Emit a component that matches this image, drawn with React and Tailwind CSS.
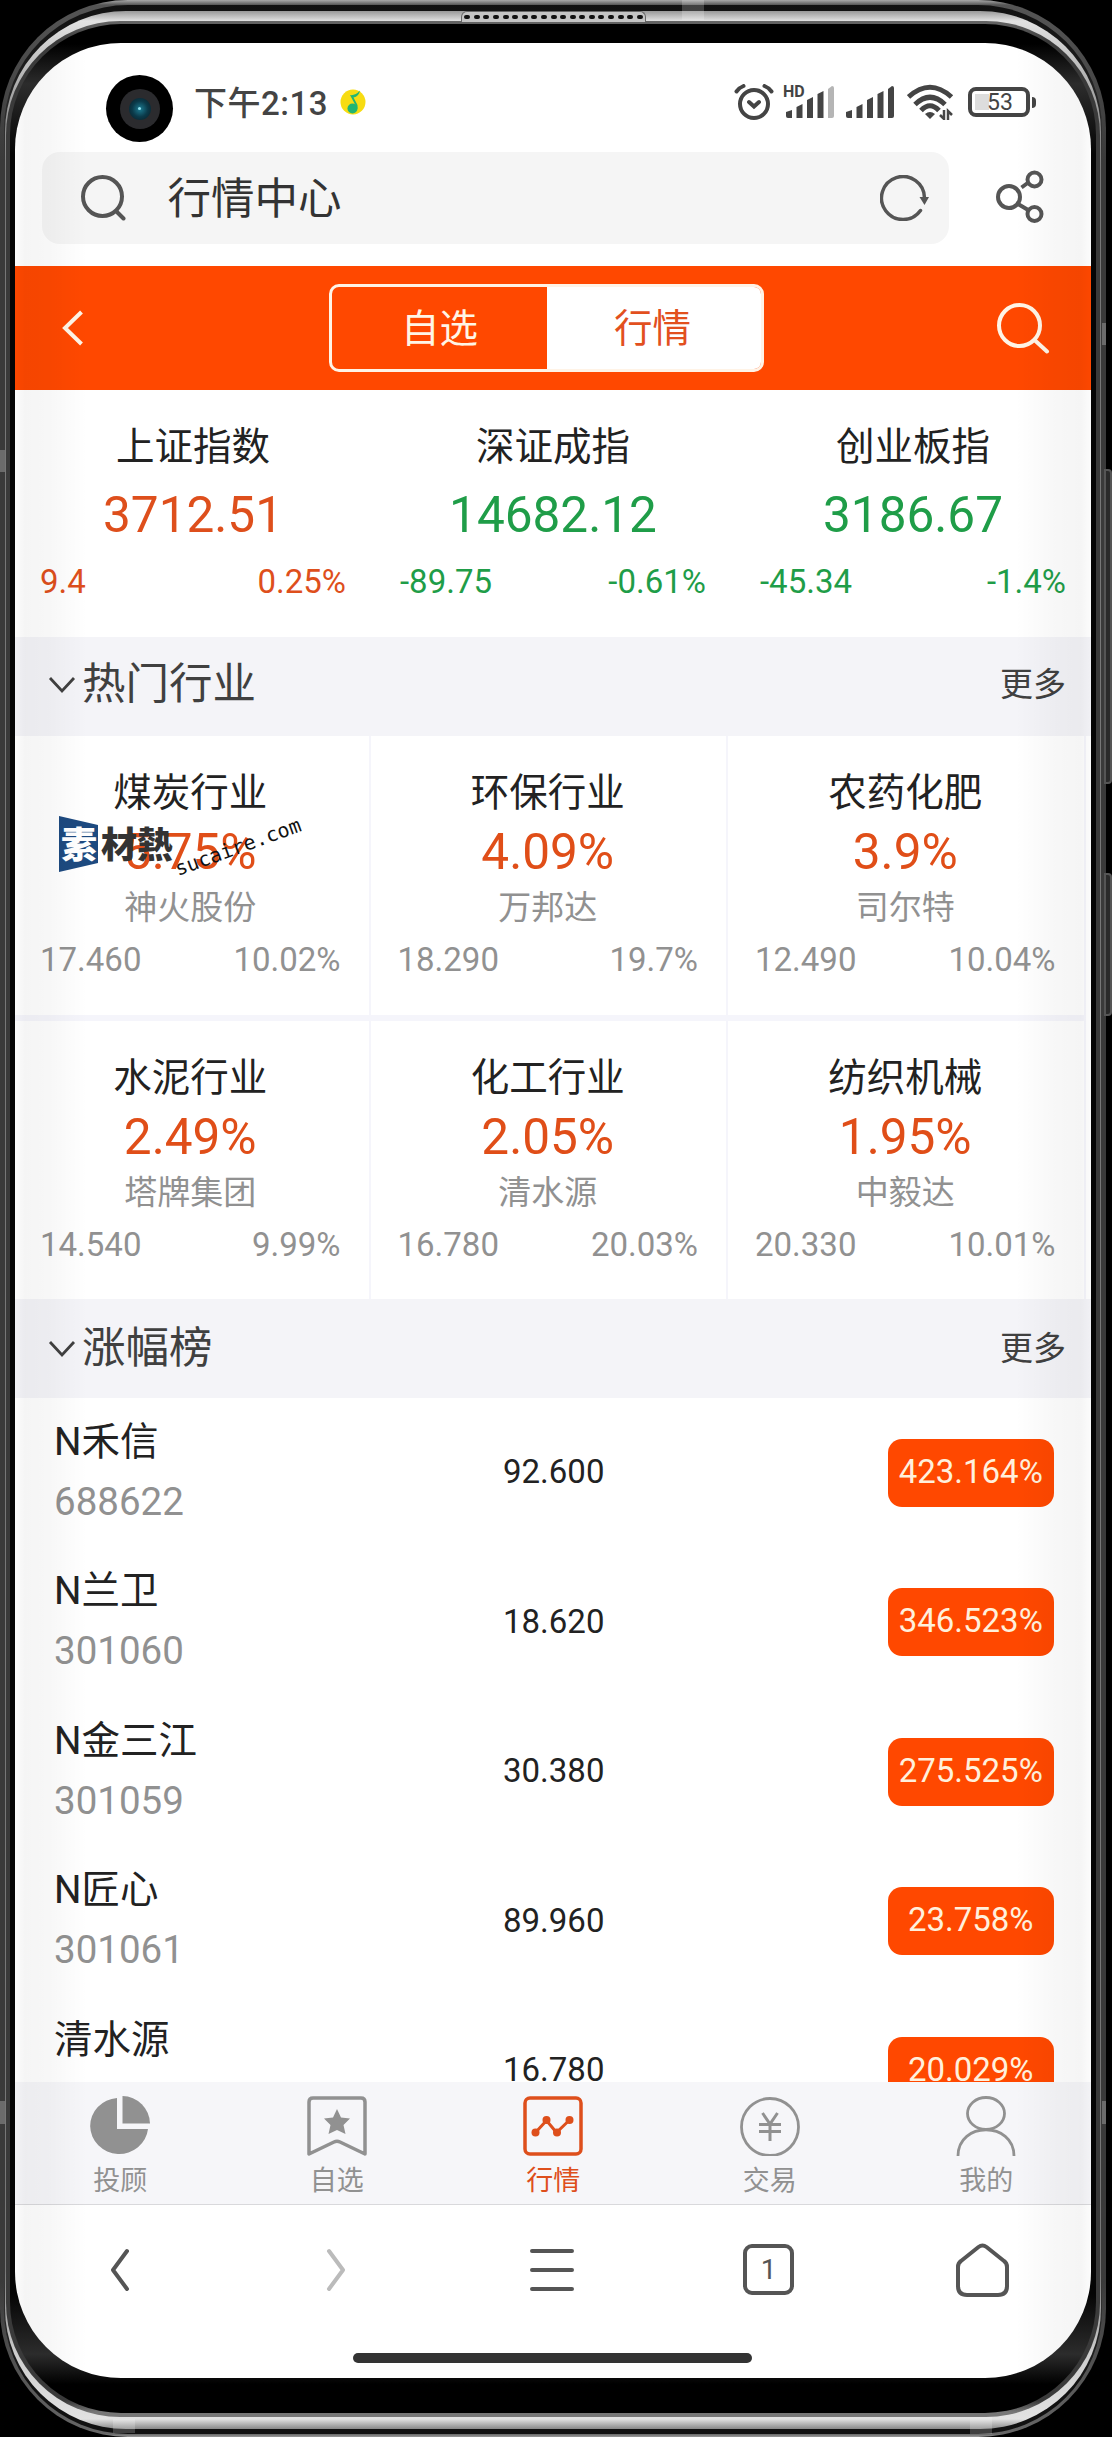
import React from 'react';

const indexes = [
    { name: '上证指数', value: '3712.51', change: '9.4', rate: '0.25%', up: true },
    { name: '深证成指', value: '14682.12', change: '-89.75', rate: '-0.61%', up: false },
    { name: '创业板指', value: '3186.67', change: '-45.34', rate: '-1.4%', up: false },
];

const industries = [
    { name: '煤炭行业', rate: '5.75%', stock: '神火股份', price: '17.460', stockRate: '10.02%' },
    { name: '环保行业', rate: '4.09%', stock: '万邦达', price: '18.290', stockRate: '19.7%' },
    { name: '农药化肥', rate: '3.9%', stock: '司尔特', price: '12.490', stockRate: '10.04%' },
    { name: '水泥行业', rate: '2.49%', stock: '塔牌集团', price: '14.540', stockRate: '9.99%' },
    { name: '化工行业', rate: '2.05%', stock: '清水源', price: '16.780', stockRate: '20.03%' },
    { name: '纺织机械', rate: '1.95%', stock: '中毅达', price: '20.330', stockRate: '10.01%' },
];

const gainers = [
    { name: 'N禾信', code: '688622', price: '92.600', rate: '423.164%' },
    { name: 'N兰卫', code: '301060', price: '18.620', rate: '346.523%' },
    { name: 'N金三江', code: '301059', price: '30.380', rate: '275.525%' },
    { name: 'N匠心', code: '301061', price: '89.960', rate: '23.758%' },
    { name: '清水源', code: '', price: '16.780', rate: '20.029%' },
];

function SignalBars({ weak }) {
    return (
        <svg width="48" height="32" viewBox="0 0 48 32" fill="#444">
            <path d="M0 26l6-2v8H2q-2 0-2-2z" />
            <path d="M10.5 21l6-3v14h-6z" />
            <path d="M21 14l6-3v21h-6z" />
            <path d="M31.500 8l6-3v27h-6z" />
            <path d="M42 3l4-3q2 0 2 2v28q0 2-2 2h-4z" fill={weak ? '#b5b5b5' : '#444'} />
        </svg>
    );
}

function StatusBar() {
    return (
        <div className="flex h-[109px] items-center pl-[91px] pr-[55px] pt-[9px]">
            {/* 前置摄像头 */}
            <div className="mt-[13px] flex h-[67px] w-[67px] items-center justify-center rounded-full bg-black">
                <div className="flex h-10 w-10 items-center justify-center rounded-full bg-[#2b2b2e]">
                    <div className="flex h-[22px] w-[22px] items-center justify-center rounded-full bg-[radial-gradient(circle,#1d7c92_0%,#0b3a4a_50%,#0a1a22_100%)]">
                        <div className="h-[3px] w-[3px] rounded-full bg-[#8fe0ee]" />
                    </div>
                </div>
            </div>
            <span className="ml-[21px] mt-[3px] text-[33px] leading-[40px] font-medium tracking-[0.5px] text-[#444]">下午2:13</span>
            <svg className="ml-[12px]" width="26" height="26" viewBox="0 0 26 26">
                <circle cx="13" cy="13" r="12.500" fill="#f7dc12" />
                <circle cx="12.500" cy="19.500" r="5" fill="#22b573" />
                <path d="M17.500 20L10 6q5 1 10-4.500-1 6-6.500 7L17.500 16z" fill="#22b573" />
            </svg>

            <div className="ml-auto flex items-center">
                <svg width="40" height="36" viewBox="0 0 40 36" fill="none" stroke="#444" strokeWidth="4" strokeLinecap="round">
                    <circle cx="20" cy="20" r="14" />
                    <path d="M2.500 7.500q3-4 7-5.500M37.500 7.500q-3-4-7-5.500M15 18l5 4.500 5-4.500" />
                </svg>
                <div className="relative ml-[12px] h-[32px] w-[48px]">
                    <SignalBars weak />
                    <span className="absolute -left-[3px] -top-[2px] text-[16px] leading-[16px] font-bold text-[#444]">HD</span>
                </div>
                <div className="ml-[12px]">
                    <SignalBars />
                </div>
                <svg className="ml-[13px]" width="47" height="36" viewBox="0 0 47 36" fill="none" stroke="#444" strokeWidth="5">
                    <path d="M1.500 13Q23 -6.500 44.500 13M8 20.500Q23 6 38 20.500M14 26.500Q23 17 32 26.500" />
                    <path d="M18 30q5-4 10 0l-5 5z" fill="#444" stroke="none" />
                    <path d="M37 26v9l-4-4M41 36v-9l4 4" strokeWidth="2.500" />
                </svg>
                <div className="ml-[14px] flex h-[30px] w-[62px] items-center rounded-[8px] border-4 border-[#444] p-[3px]">
                    <div className="h-full w-[14px] bg-[#ddd]" />
                    <span className="-ml-[2px] text-[23px] leading-[23px] text-[#444]">53</span>
                </div>
                <div className="ml-[2px] h-[11px] w-[4px] rounded-r bg-[#444]" />
            </div>
        </div>
    );
}

function AddressBar() {
    return (
        <div className="flex h-[114px] items-start pl-[26.5px]">
            <div className="flex h-[92px] w-[907px] items-center rounded-[18px] bg-[#f5f5f5] pl-[39px] pr-[19px]">
                <svg width="46" height="46" viewBox="0 0 46 46" fill="none" stroke="#555" strokeWidth="4" strokeLinecap="round">
                    <circle cx="21.500" cy="21.500" r="19.500" />
                    <path d="M35.500 36.500L42.500 43.500" />
                </svg>
                <span className="ml-[41px] mt-[4px] text-[43.5px] leading-[60px] text-[#333]">行情中心</span>
                <svg className="ml-auto" width="50" height="46" viewBox="0 0 50 46" fill="none" stroke="#555" strokeWidth="3.500">
                    <path d="M44.500 23A21.500 21.500 0 1 0 40.500 35.500" strokeLinecap="round" />
                    <path d="M39.500 22h9.500l-4.500 8z" fill="#555" stroke="none" />
                </svg>
            </div>
            <svg className="ml-[47px] mt-[18px]" width="48" height="54" viewBox="0 0 48 54" fill="none" stroke="#555" strokeWidth="4">
                <circle cx="13" cy="27" r="11" />
                <circle cx="38.500" cy="9.500" r="7" />
                <circle cx="38.500" cy="44" r="7" />
                <path d="M25.500 17.500L33 12M22 34l11 6.500" />
            </svg>
        </div>
    );
}

function TopBar() {
    return (
        <div className="flex h-[124px] items-center bg-[#ff4800] pl-[47px] pr-[41px]">
            <svg width="22" height="36" viewBox="0 0 22 36" fill="none" stroke="#fff5e6" strokeWidth="4">
                <path d="M19.500 2L3 18l16.500 16" />
            </svg>
            <div className="ml-[245px] flex h-[88px] w-[435px] overflow-hidden rounded-[10px] border-[3px] border-[#fff3e6] text-[38.5px] leading-[81px]">
                <button className="w-[215px] text-center text-[#fff5e6]">自选</button>
                <button className="flex-1 bg-white pr-[3px] text-center text-[#e2501e]">行情</button>
            </div>
            <svg className="ml-auto" width="54" height="51" viewBox="0 0 54 51" fill="none" stroke="#fff5e6" strokeWidth="4" strokeLinecap="round">
                <circle cx="23.500" cy="22.500" r="20.500" />
                <path d="M38.500 37L51 48.500" />
            </svg>
        </div>
    );
}

function IndexCard({ item }) {
    return (
        <div className={`w-[360px] shrink-0 pl-[26px] pr-[28px] pt-[26.500px] text-center ${item.up ? 'text-[#de4f1c]' : 'text-[#1f9d48]'}`}>
            <div className="text-[38.5px] leading-[60px] text-[#222]">{item.name}</div>
            <div className="mt-[1px] text-[49.5px] leading-[75px]">{item.value}</div>
            <div className="flex justify-between text-[33px] leading-[58px]">
                <span>{item.change}</span>
                <span>{item.rate}</span>
            </div>
        </div>
    );
}

function SectionHeader({ title, className }) {
    return (
        <div className={`flex h-[99px] items-center bg-[#f4f4f8] pl-[33px] pr-[25px] text-[#404040] ${className}`}>
            <svg width="28" height="18" viewBox="0 0 28 18" fill="none" stroke="#404040" strokeWidth="2.800">
                <path d="M2 2l12 13L26 2" />
            </svg>
            <span className="ml-[6px] text-[43.5px] leading-[60px]">{title}</span>
            <span className="ml-auto text-[33px] leading-[60px]">更多</span>
        </div>
    );
}

function IndustryCell({ item, first }) {
    return (
        <div className={`w-[357.5px] shrink-0 border-r-[2.500px] border-[#f5f5fb] pl-[27px] pr-[28px] pt-[28px] text-center text-[#919191] ${first ? 'h-[285px] border-b-[6px]' : 'h-[278px]'}`}>
            <div className="text-[38.5px] leading-[57px] text-[#222]">{item.name}</div>
            <div className="mt-[3px] text-[49.5px] leading-[57px] text-[#e04e18]">{item.rate}</div>
            <div className="-mt-[3px] text-[33px] leading-[59px]">{item.stock}</div>
            <div className="mt-[2px] flex justify-between text-[33px] leading-[42px]">
                <span>{item.price}</span>
                <span>{item.stockRate}</span>
            </div>
        </div>
    );
}

function GainerRow({ item }) {
    return (
        <div className="flex h-[149.5px] items-center pl-[39px] pr-[37.5px]">
            <div className="-mt-[2px] w-[449px] text-[38.5px]">
                <div className="h-[60px] leading-[60px] text-[#222]">{item.name}</div>
                <div className="h-[60px] leading-[60px] text-[#919191]">{item.code}</div>
            </div>
            <span className="-mt-[2px] text-[33px] text-[#222]">{item.price}</span>
            <span className="ml-auto h-[68px] w-[165.5px] rounded-[14px] bg-[#ff4800] text-center text-[33px] leading-[65px] text-[#fff0dc]">
                {item.rate}
            </span>
        </div>
    );
}

function TabItem({ label, active, children }) {
    return (
        <div className={`flex w-[216.5px] shrink-0 flex-col items-center pt-[14px] ${active ? 'text-[#de4f1c]' : 'text-[#919191]'}`}>
            <svg width="60" height="60" viewBox="0 0 60 60" fill="none" stroke="currentColor" strokeWidth="3.500">
                {children}
            </svg>
            <span className="mt-[5px] text-[27px] leading-[40px]">{label}</span>
        </div>
    );
}

function TabBar() {
    return (
        <div className="-ml-[3px] flex h-[123px] w-[1083px] shrink-0 border-b border-[#d9d9dc] bg-[#f6f6f9]">
            <TabItem label="投顾">
                <path d="M27 2v31h31A29 28 0 1 1 27 2z" fill="currentColor" stroke="none" />
                <path d="M32.500 0A28 28 0 0 1 60 27.500H32.500z" fill="currentColor" stroke="none" />
            </TabItem>
            <TabItem label="自选">
                <path d="M2 58V6q0-4 4-4h48q4 0 4 4v52L33 46q-3-1.500-6 0z" strokeLinejoin="round" />
                <path d="M30 13l4 8.500 9 1-6.500 6.500 2 9L30 34l-8.500 4 2-9L17 22.500l9-1z" fill="currentColor" stroke="none" />
            </TabItem>
            <TabItem label="行情" active>
                <rect x="2" y="2" width="56" height="56" rx="5" />
                <path d="M12.500 36.500l11-12 10 12 12.500-12" strokeWidth="3" />
                <g fill="currentColor" stroke="none">
                    <circle cx="12.500" cy="36.500" r="4" />
                    <circle cx="23.500" cy="24" r="4" />
                    <circle cx="34" cy="36.500" r="4" />
                    <circle cx="46.500" cy="24" r="4" />
                </g>
            </TabItem>
            <TabItem label="交易">
                <circle cx="30" cy="31" r="28.500" strokeWidth="2.800" />
                <path d="M22.500 17l7.500 11 7.500-11M30 28v17M19 28.500h22M19 35.500h22" strokeWidth="3" />
            </TabItem>
            <TabItem label="我的">
                <ellipse cx="30" cy="17.500" rx="18.500" ry="16" strokeWidth="2.800" />
                <path d="M2 60C2 25 58 25 58 60" strokeWidth="2.800" />
            </TabItem>
        </div>
    );
}

function BrowserBar() {
    return (
        <div className="h-[173px] shrink-0">
            <div className="flex h-[129px] items-center pl-[95px] pr-[82px]">
                <svg width="20" height="44" viewBox="0 0 20 44" fill="none" stroke="#555" strokeWidth="4" strokeLinecap="round" strokeLinejoin="round">
                    <path d="M17 3L3 22l14 19" />
                </svg>
                <svg className="ml-[196px]" width="20" height="44" viewBox="0 0 20 44" fill="none" stroke="#bbb" strokeWidth="4" strokeLinecap="round" strokeLinejoin="round">
                    <path d="M3 3l14 19L3 41" />
                </svg>
                <svg className="ml-[183px]" width="46" height="44" viewBox="0 0 46 44" fill="none" stroke="#555" strokeWidth="4" strokeLinecap="round">
                    <path d="M3 3h40M3 22h40M3 41h40" />
                </svg>
                <div className="ml-[168px] flex h-[51px] w-[51px] items-center justify-center rounded-[9px] border-4 border-[#555] text-[28px] leading-none text-[#555]">
                    1
                </div>
                <svg className="ml-auto" width="53" height="54" viewBox="0 0 53 54" fill="none" stroke="#555" strokeWidth="4" strokeLinejoin="round">
                    <path d="M2 24q0-4 3-6L22.500 4q4-3 8 0L48 18q3 2 3 6v19q0 9-9 9H11q-9 0-9-9z" />
                </svg>
            </div>
            <div className="ml-[338px] mt-[19px] h-[10px] w-[399px] rounded-full bg-[#333]" />
        </div>
    );
}

function Watermark() {
    return (
        <div className="absolute left-[44px] top-[773px] h-[64px] w-[260px]">
            <svg width="260" height="64" viewBox="0 0 260 64">
                <path d="M0 0l39 9v38L0 56z" fill="#1d4a80" />
                <g fontFamily="'Noto Sans CJK SC', sans-serif" fontWeight="900" fontSize="36">
                    <text x="2" y="42" fill="#fff">素</text>
                    <text x="42" y="42" fill="#333">材熱</text>
                </g>
                <text x="119" y="60" fill="#111" fontFamily="'DejaVu Sans Mono', monospace" fontSize="20" transform="rotate(-20 119 60)">
                    sucaire.com
                </text>
            </svg>
        </div>
    );
}

export default function App() {
    return (
        <div className="relative h-[2437px] w-[1112px] overflow-hidden bg-black font-[Roboto,'Noto_Sans_CJK_SC',sans-serif]">
            {/* 侧边按键 */}
            <div className="absolute left-[1104px] top-[469px] h-[315px] w-[8px] rounded-r border-2 border-[#555] bg-[#2a2a2a]" />
            <div className="absolute left-[1104px] top-[873px] h-[143px] w-[8px] rounded-r border-2 border-[#555] bg-[#2a2a2a]" />

            {/* 金属边框，由外到内 */}
            <div className="h-[2437px] w-[1106px] rounded-[128px] bg-[linear-gradient(to_bottom,#aaa_0,#555_5px,#3a3a3a_160px,#3a3a3a_2280px,#666_2434px,#999_2437px)] px-[4px] pt-[5px] pb-[3px]">
                <div className="h-full rounded-[124px] bg-[linear-gradient(to_bottom,#111_0,#1c1c1c_60px,#3a3a3a_160px,#3a3a3a_2270px,#111_2380px)] px-px pt-[6px] pb-[5px]">
                    <div className="h-full rounded-[121px] bg-[linear-gradient(to_bottom,#999_0,#e2e2e2_10px,#999_100px,#777_160px,#777_2260px,#ccc_2340px,#e2e2e2_2408px,#888_2418px)] px-px pt-[10px] pb-[12px]">
                        <div className="h-full rounded-[114px] bg-[linear-gradient(to_bottom,#666_0,#3a3a3a_20px,#3a3a3a_2380px,#777_2391px)] px-[4px] pt-[3px] pb-[4px]">
                            <div className="h-full rounded-[111px] bg-[linear-gradient(to_bottom,#000_20px,#2c2c2c_60px,#050505_130px,#050505_2270px,#2c2c2c_2330px,#000_2360px)] px-[5px] pt-[19px] pb-[35px]">
                                <div className="relative flex h-[2335px] w-[1076px] flex-col overflow-hidden rounded-[106px] bg-white">
                                    <StatusBar />
                                    <AddressBar />
                                    <TopBar />
                                    <div className="-ml-px flex h-[247px] shrink-0">
                                        {indexes.map((item) => (
                                            <IndexCard key={item.name} item={item} />
                                        ))}
                                    </div>
                                    <SectionHeader title="热门行业" className="pb-[4px]" />
                                    <div className="-ml-[2px] flex w-[1076px] shrink-0 flex-wrap">
                                        {industries.map((item, i) => (
                                            <IndustryCell key={item.name} item={item} first={i < 3} />
                                        ))}
                                    </div>
                                    <SectionHeader title="涨幅榜" className="pt-px" />
                                    <div className="h-[684px] shrink-0 overflow-hidden">
                                        {gainers.map((item) => (
                                            <GainerRow key={item.name} item={item} />
                                        ))}
                                    </div>
                                    <TabBar />
                                    <BrowserBar />
                                    <Watermark />

                                    {/* 曲面屏两侧的阴影 */}
                                    <div className="pointer-events-none absolute inset-y-0 left-0 w-[72px] bg-[linear-gradient(to_right,rgba(0,0,0,0.01)_0,rgba(0,0,0,0.04)_10px,rgba(0,0,0,0.03)_35px,transparent)]" />
                                    <div className="pointer-events-none absolute inset-y-0 right-0 w-[76px] bg-[linear-gradient(to_left,rgba(0,0,0,0.01)_0,rgba(0,0,0,0.04)_10px,rgba(0,0,0,0.03)_35px,transparent)]" />
                                </div>
                            </div>
                        </div>
                    </div>
                </div>
            </div>

            {/* 听筒 */}
            <div className="absolute left-[461px] top-[11px] flex h-[11px] w-[185px] items-center justify-center gap-[3.6px] rounded-t-md border border-b-0 border-[#666] bg-[#c4c4c4]">
                {Array.from({ length: 19 }, (_, i) => (
                    <span key={i} className="h-[4px] w-[6px] rounded-full bg-[#111]" />
                ))}
            </div>

            {/* 天线条 */}
            <div className="absolute left-[682px] top-0 h-[20px] w-[22px] bg-white/20" />
            <div className="absolute left-0 top-[450px] h-[22px] w-[5px] bg-white/25" />
            <div className="absolute left-[1102px] top-[323px] h-[22px] w-[4px] bg-white/25" />
            <div className="absolute left-0 top-[2101px] h-[23px] w-[5px] bg-white/25" />
            <div className="absolute left-[1102px] top-[2101px] h-[23px] w-[4px] bg-white/25" />
            <div className="absolute left-[113px] top-[2419px] h-[14px] w-[22px] bg-white/20" />
            <div className="absolute left-[970px] top-[2417px] h-[17px] w-[22px] bg-white/20" />
        </div>
    );
}
